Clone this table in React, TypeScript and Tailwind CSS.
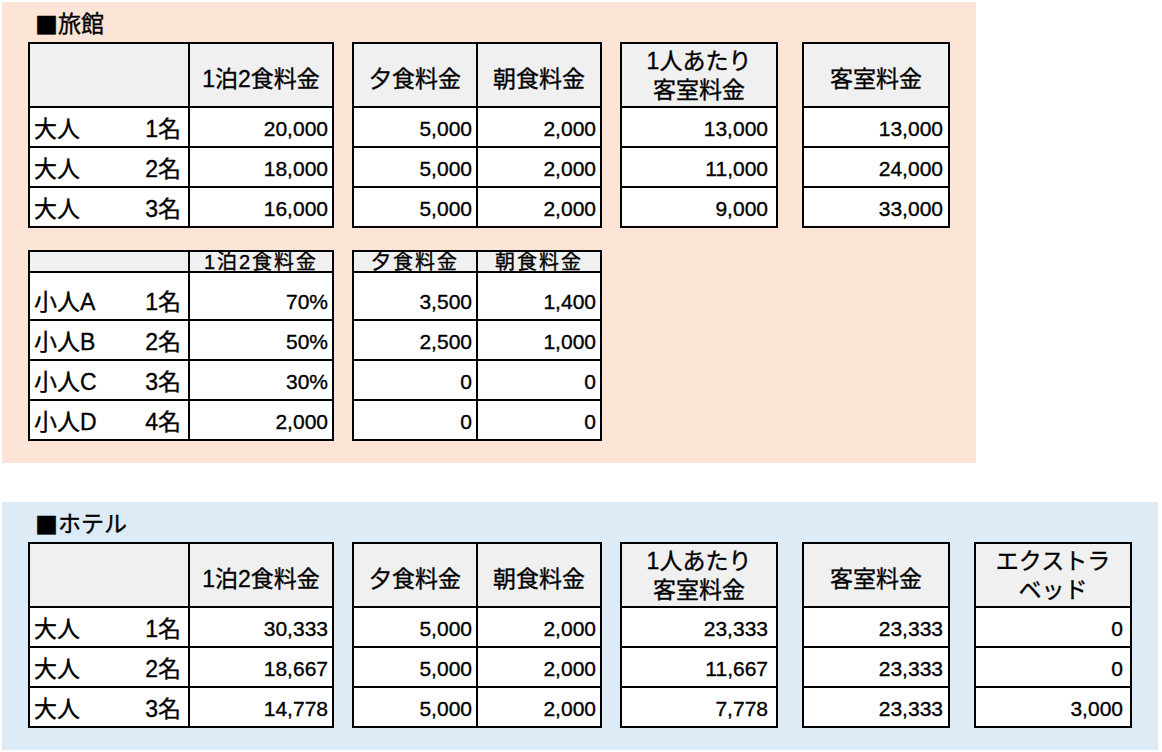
import clsx from "clsx";

type Kind = "adult" | "kid";

type Col = {
  w: string;
  type: "label" | "num";
  pr?: string;
};

type Row = {
  label?: [string, string];
  nums: string[];
};

const ADULT_ROWS = ["h-[40px]", "h-[40px]", "h-[40px]"];
const KID_ROWS = ["h-[48px]", "h-[40px]", "h-[40px]", "h-[40px]"];

function Sheet({
  w,
  kind,
  cols,
  heads,
  rows,
}: {
  w: string;
  kind: Kind;
  cols: Col[];
  heads: string[][];
  rows: Row[];
}) {
  const heights = kind === "adult" ? ADULT_ROWS : KID_ROWS;
  return (
    <div className={clsx("border-2 border-black bg-white", w)}>
      <div
        className={clsx(
          "flex bg-[#f0f0f0]",
          kind === "adult" ? "h-[62px]" : "h-[19px]",
        )}
      >
        {heads.map((lines, i) => (
          <div
            key={i}
            className={clsx(
              "flex flex-col items-center justify-center text-center whitespace-nowrap",
              cols[i].w,
              i > 0 && "border-l-2 border-black",
              kind === "kid"
                ? "text-[20px] leading-[19px] tracking-[2px] pt-[2px]"
                : lines.length > 1
                  ? "text-[23px] leading-[29px] pt-[2px]"
                  : "text-[23px] leading-[29px] pt-[8px]",
            )}
          >
            {lines.map((l) => (
              <span key={l}>{l}</span>
            ))}
          </div>
        ))}
      </div>
      {rows.map((row, r) => {
        let n = 0;
        return (
          <div
            key={r}
            className={clsx("flex border-t-2 border-black", heights[r])}
          >
            {cols.map((c, i) => {
              const divider = i > 0 && "border-l-2 border-black";
              if (c.type === "label") {
                return (
                  <div
                    key={i}
                    className={clsx(
                      "flex items-end justify-between pl-[4px] pr-[7px] pb-[5px] text-[23px] leading-[24px]",
                      c.w,
                      divider,
                    )}
                  >
                    <span>{row.label?.[0]}</span>
                    <span>{row.label?.[1]}</span>
                  </div>
                );
              }
              const v = row.nums[n++];
              return (
                <div
                  key={i}
                  className={clsx(
                    "flex items-end justify-end pb-[5px] text-[21px] leading-[24px]",
                    c.pr ?? "pr-[4px]",
                    c.w,
                    divider,
                  )}
                >
                  {v}
                </div>
              );
            })}
          </div>
        );
      })}
    </div>
  );
}

function Title({ text }: { text: string }) {
  return (
    <div className="flex h-[40px] items-end pb-[6px] pl-[7px] text-[23px] leading-[24px]">
      <span className="[font-family:'Noto_Sans_CJK_JP',sans-serif]">■</span>
      <span>{text}</span>
    </div>
  );
}

const LABEL_COLS: Col[] = [
  { w: "w-[158px]", type: "label" },
  { w: "w-[144px]", type: "num" },
];
const MEAL_COLS: Col[] = [
  { w: "w-[122px]", type: "num" },
  { w: "w-[124px]", type: "num" },
];
const WIDE_COL: Col[] = [{ w: "w-[154px]", type: "num", pr: "pr-[8px]" }];
const ROOM_COL: Col[] = [{ w: "w-[144px]", type: "num", pr: "pr-[5px]" }];
const EXTRA_COL: Col[] = [{ w: "w-[154px]", type: "num", pr: "pr-[7px]" }];

const one = (vals: string[]): Row[] => vals.map((v) => ({ nums: [v] }));

export default function App() {
  return (
    <div className="w-[1162px] h-[752px] bg-white pt-[2px] pl-[2px] text-black [-webkit-text-stroke:0.35px_black] [font-family:'Liberation_Sans','Noto_Sans_CJK_JP',sans-serif]">
      <section className="w-[974px] h-[461px] bg-[#fce4d6] pl-[26px]">
        <Title text="旅館" />
        <div className="flex items-start">
          <Sheet
            w="w-[306px]"
            kind="adult"
            cols={LABEL_COLS}
            heads={[[""], ["1泊2食料金"]]}
            rows={[
              { label: ["大人", "1名"], nums: ["20,000"] },
              { label: ["大人", "2名"], nums: ["18,000"] },
              { label: ["大人", "3名"], nums: ["16,000"] },
            ]}
          />
          <div className="ml-[18px]">
            <Sheet
              w="w-[250px]"
              kind="adult"
              cols={MEAL_COLS}
              heads={[["夕食料金"], ["朝食料金"]]}
              rows={[
                { nums: ["5,000", "2,000"] },
                { nums: ["5,000", "2,000"] },
                { nums: ["5,000", "2,000"] },
              ]}
            />
          </div>
          <div className="ml-[18px]">
            <Sheet
              w="w-[158px]"
              kind="adult"
              cols={WIDE_COL}
              heads={[["1人あたり", "客室料金"]]}
              rows={one(["13,000", "11,000", "9,000"])}
            />
          </div>
          <div className="ml-[24px]">
            <Sheet
              w="w-[148px]"
              kind="adult"
              cols={ROOM_COL}
              heads={[["客室料金"]]}
              rows={one(["13,000", "24,000", "33,000"])}
            />
          </div>
        </div>
        <div className="mt-[22px] flex items-start">
          <Sheet
            w="w-[306px]"
            kind="kid"
            cols={LABEL_COLS}
            heads={[[""], ["1泊2食料金"]]}
            rows={[
              { label: ["小人A", "1名"], nums: ["70%"] },
              { label: ["小人B", "2名"], nums: ["50%"] },
              { label: ["小人C", "3名"], nums: ["30%"] },
              { label: ["小人D", "4名"], nums: ["2,000"] },
            ]}
          />
          <div className="ml-[18px]">
            <Sheet
              w="w-[250px]"
              kind="kid"
              cols={MEAL_COLS}
              heads={[["夕食料金"], ["朝食料金"]]}
              rows={[
                { nums: ["3,500", "1,400"] },
                { nums: ["2,500", "1,000"] },
                { nums: ["0", "0"] },
                { nums: ["0", "0"] },
              ]}
            />
          </div>
        </div>
      </section>

      <section className="mt-[39px] w-[1156px] h-[248px] bg-[#ddebf7] pl-[26px]">
        <Title text="ホテル" />
        <div className="flex items-start">
          <Sheet
            w="w-[306px]"
            kind="adult"
            cols={LABEL_COLS}
            heads={[[""], ["1泊2食料金"]]}
            rows={[
              { label: ["大人", "1名"], nums: ["30,333"] },
              { label: ["大人", "2名"], nums: ["18,667"] },
              { label: ["大人", "3名"], nums: ["14,778"] },
            ]}
          />
          <div className="ml-[18px]">
            <Sheet
              w="w-[250px]"
              kind="adult"
              cols={MEAL_COLS}
              heads={[["夕食料金"], ["朝食料金"]]}
              rows={[
                { nums: ["5,000", "2,000"] },
                { nums: ["5,000", "2,000"] },
                { nums: ["5,000", "2,000"] },
              ]}
            />
          </div>
          <div className="ml-[18px]">
            <Sheet
              w="w-[158px]"
              kind="adult"
              cols={WIDE_COL}
              heads={[["1人あたり", "客室料金"]]}
              rows={one(["23,333", "11,667", "7,778"])}
            />
          </div>
          <div className="ml-[24px]">
            <Sheet
              w="w-[148px]"
              kind="adult"
              cols={ROOM_COL}
              heads={[["客室料金"]]}
              rows={one(["23,333", "23,333", "23,333"])}
            />
          </div>
          <div className="ml-[24px]">
            <Sheet
              w="w-[158px]"
              kind="adult"
              cols={EXTRA_COL}
              heads={[["エクストラ", "ベッド"]]}
              rows={one(["0", "0", "3,000"])}
            />
          </div>
        </div>
      </section>
    </div>
  );
}
